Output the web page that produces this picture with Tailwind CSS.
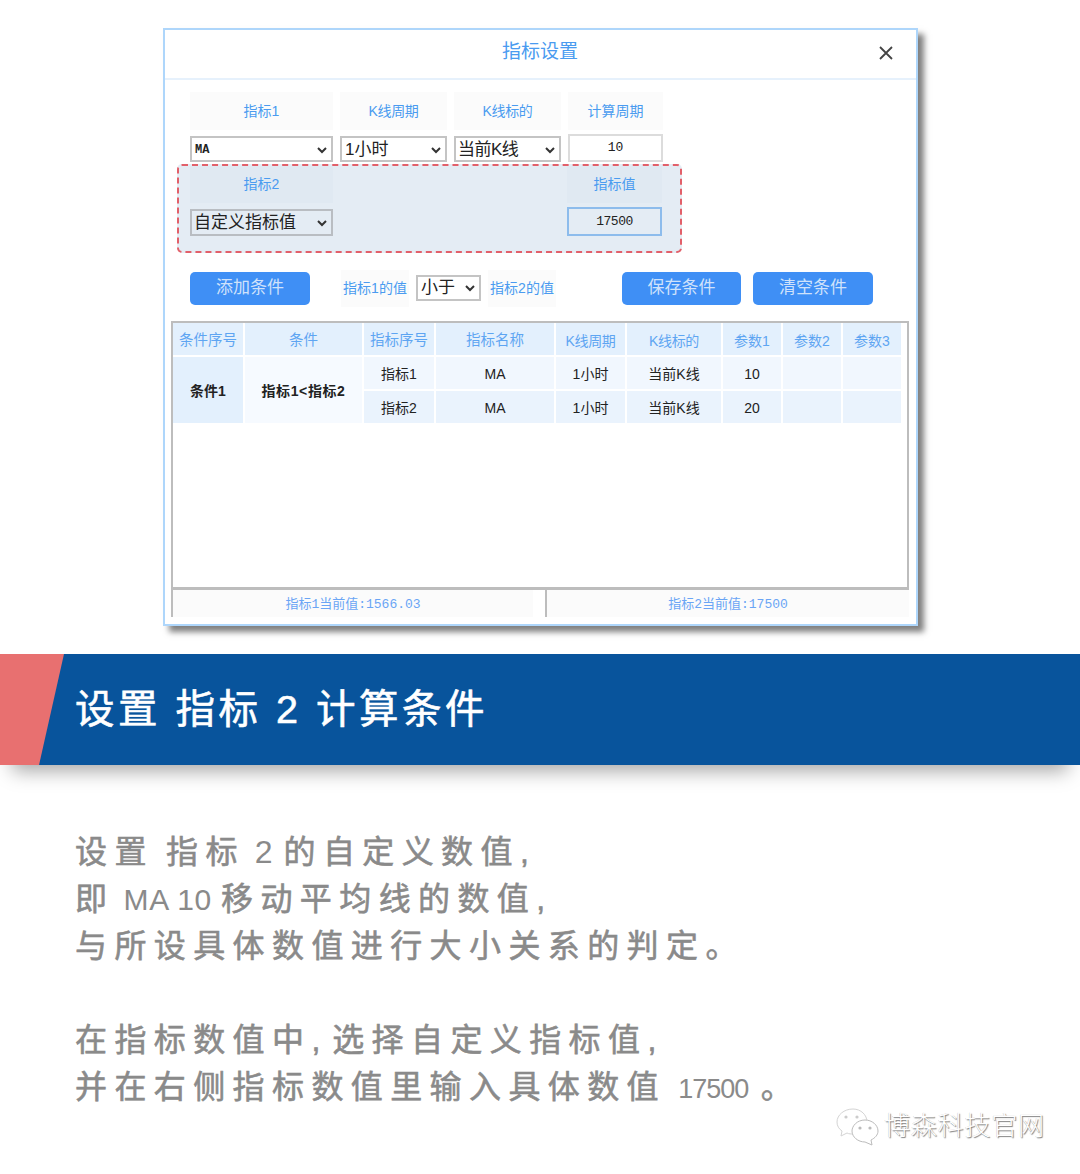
<!DOCTYPE html>
<html lang="zh-CN">
<head>
    <meta charset="UTF-8">
    <title>指标设置</title>
    <script src="https://cdn.jsdelivr.net/npm/@tailwindcss/browser@4"></script>
</head>
<body class="bg-white font-['Liberation_Sans','Noto_Sans_CJK_SC',sans-serif]">
<div class="w-[1080px] h-[1174px] overflow-hidden pt-[28px]">

    <!-- 指标设置 窗口 -->
    <div class="ml-[163px] w-[755px] h-[598px] bg-white border-2 border-[#aed6fb] shadow-[6px_6px_6px_rgba(0,0,0,0.5)]">
        <div class="relative h-[50px] border-b-2 border-[#e6f1fc] flex items-center justify-center pb-[4px]">
            <span class="text-[19px] text-[#4a9bf0] -ml-[1px]">指标设置</span>
            <svg class="absolute right-[22px] top-[15px]" width="16" height="16" viewBox="0 0 16 16">
                <path d="M2 2 L14 14 M14 2 L2 14" stroke="#444" stroke-width="1.8" fill="none"/>
            </svg>
        </div>

        <div class="pl-[25px] pt-[12px]">
            <div class="grid grid-cols-[143px_107px_107px_95px] gap-x-[7px] text-[14px] text-[#4a9bf0] text-center">
                <div class="h-[38px] bg-[#fbfbfb] flex items-center justify-center">指标1</div>
                <div class="h-[38px] bg-[#fbfbfb] flex items-center justify-center tracking-[-0.3px]">K线周期</div>
                <div class="h-[38px] bg-[#fbfbfb] flex items-center justify-center tracking-[-0.3px]">K线标的</div>
                <div class="h-[38px] bg-[#fbfbfb] flex items-center justify-center">计算周期</div>
            </div>
            <div class="grid grid-cols-[143px_107px_107px_95px] gap-x-[7px] mt-[4px] items-end h-[28px] text-[#222]">
                <div class="h-[26px] border-2 border-[#c4c4c4] flex items-center justify-between pl-[3px] pr-[3px] pt-[2px] font-['Liberation_Mono'] font-bold text-[12px]">MA
                    <svg width="12" height="12" viewBox="0 0 12 12"><path d="M2 4 L6 8 L10 4" stroke="#333" stroke-width="2" fill="none"/></svg>
                </div>
                <div class="h-[26px] border-2 border-[#c4c4c4] flex items-center justify-between pl-[3px] pr-[3px] pt-[1px] text-[17px]">1小时
                    <svg width="12" height="12" viewBox="0 0 12 12"><path d="M2 4 L6 8 L10 4" stroke="#333" stroke-width="2" fill="none"/></svg>
                </div>
                <div class="h-[26px] border-2 border-[#c4c4c4] flex items-center justify-between pl-[2px] pr-[3px] pt-[1px] text-[17px] tracking-[-0.5px]">当前K线
                    <svg width="12" height="12" viewBox="0 0 12 12"><path d="M2 4 L6 8 L10 4" stroke="#333" stroke-width="2" fill="none"/></svg>
                </div>
                <div class="h-[28px] border-2 border-[#dcdcdc] flex items-center justify-center font-['Liberation_Mono'] text-[13px]">10</div>
            </div>

            <!-- 指标2 -->
            <div class="-ml-[13px] w-[505px] h-[89px] mt-[2px] pl-[11px] bg-[#e4ecf4] border-2 border-dashed border-[#e2606a] rounded-[5px]">
                <div class="grid grid-cols-[143px_234px_95px] text-[14px] text-[#4a9bf0] text-center h-[37px]">
                    <div class="bg-[#e0e9f2] flex items-center justify-center">指标2</div>
                    <div></div>
                    <div class="w-[95px] bg-[#e0e9f2] flex items-center justify-center">指标值</div>
                </div>
                <div class="grid grid-cols-[143px_234px_95px] mt-[4px] h-[29px] items-end text-[#222]">
                    <div class="h-[27px] border-2 border-[#b9bdc2] flex items-center justify-between pl-[2px] pr-[3px] text-[17px]">自定义指标值
                        <svg width="12" height="12" viewBox="0 0 12 12"><path d="M2 4 L6 8 L10 4" stroke="#333" stroke-width="2" fill="none"/></svg>
                    </div>
                    <div></div>
                    <div class="w-[95px] h-[29px] border-2 border-[#8dbcec] flex items-center justify-center font-['Liberation_Mono'] text-[13px] tracking-[-0.5px]">17500</div>
                </div>
            </div>

            <!-- 条件按钮 -->
            <div class="flex items-center h-[46px] mt-[12px] text-[14px] text-[#4a9bf0]">
                <div class="w-[120px] h-[33px] rounded-[5px] bg-[#3f8ff5] text-[#cfe2fb] text-[17px] flex items-center justify-center">添加条件</div>
                <div class="ml-[31px] w-[68px] h-[37px] bg-[#fbfbfb] flex items-center justify-center">指标1的值</div>
                <div class="ml-[7px] w-[65px] h-[26px] border-2 border-[#c4c4c4] text-[#222] flex items-center justify-between pl-[3px] pr-[3px] text-[17px]">小于
                    <svg width="12" height="12" viewBox="0 0 12 12"><path d="M2 4 L6 8 L10 4" stroke="#333" stroke-width="2" fill="none"/></svg>
                </div>
                <div class="ml-[9px] w-[68px] h-[37px] bg-[#fbfbfb] flex items-center justify-center -translate-x-[2px]">指标2的值</div>
                <div class="ml-[64px] w-[119px] h-[33px] rounded-[5px] bg-[#3f8ff5] text-[#cfe2fb] text-[17px] flex items-center justify-center">保存条件</div>
                <div class="ml-[12px] w-[120px] h-[33px] rounded-[5px] bg-[#3f8ff5] text-[#cfe2fb] text-[17px] flex items-center justify-center">清空条件</div>
            </div>
        </div>

        <!-- 条件表格 -->
        <div class="ml-[6px] w-[738px] h-[269px] mt-[10px] border-2 border-[#bdbdbd] border-b-[3px]">
            <div class="grid grid-cols-[70px_117px_70px_118px_69px_94px_58px_58px_58px] grid-rows-[32px_32px_32px] gap-[2px] text-center text-[14px] text-[#222] [&>div]:pt-[2px] [&>div:nth-child(-n+9)]:pt-[4px]">
                <div class="bg-[#e3f0fd] text-[#5ea5f2] text-[14.5px] flex items-center justify-center">条件序号</div>
                <div class="bg-[#e3f0fd] text-[#5ea5f2] text-[14.5px] flex items-center justify-center">条件</div>
                <div class="bg-[#e3f0fd] text-[#5ea5f2] text-[14.5px] flex items-center justify-center">指标序号</div>
                <div class="bg-[#e3f0fd] text-[#5ea5f2] text-[14.5px] flex items-center justify-center">指标名称</div>
                <div class="bg-[#e3f0fd] text-[#5ea5f2] text-[14px] tracking-[-0.3px] flex items-center justify-center">K线周期</div>
                <div class="bg-[#e3f0fd] text-[#5ea5f2] text-[14px] tracking-[-0.3px] flex items-center justify-center">K线标的</div>
                <div class="bg-[#e3f0fd] text-[#5ea5f2] text-[14px] flex items-center justify-center">参数1</div>
                <div class="bg-[#e3f0fd] text-[#5ea5f2] text-[14px] flex items-center justify-center">参数2</div>
                <div class="bg-[#e3f0fd] text-[#5ea5f2] text-[14px] flex items-center justify-center">参数3</div>

                <div class="row-span-2 bg-[#e3f0fd] font-bold flex items-center justify-center">条件1</div>
                <div class="row-span-2 bg-[#f6faff] font-bold tracking-[0.6px] flex items-center justify-center">指标1&lt;指标2</div>
                <div class="bg-[#f1f7fe] flex items-center justify-center">指标1</div>
                <div class="bg-[#f1f7fe] flex items-center justify-center">MA</div>
                <div class="bg-[#f1f7fe] flex items-center justify-center">1小时</div>
                <div class="bg-[#f1f7fe] flex items-center justify-center">当前K线</div>
                <div class="bg-[#f1f7fe] flex items-center justify-center">10</div>
                <div class="bg-[#f1f7fe]"></div>
                <div class="bg-[#f1f7fe]"></div>

                <div class="bg-[#eaf3fd] flex items-center justify-center">指标2</div>
                <div class="bg-[#eaf3fd] flex items-center justify-center">MA</div>
                <div class="bg-[#eaf3fd] flex items-center justify-center">1小时</div>
                <div class="bg-[#eaf3fd] flex items-center justify-center">当前K线</div>
                <div class="bg-[#eaf3fd] flex items-center justify-center">20</div>
                <div class="bg-[#eaf3fd]"></div>
                <div class="bg-[#eaf3fd]"></div>
            </div>
        </div>

        <!-- 当前值 -->
        <div class="ml-[6px] w-[738px] h-[28px] flex text-[13px] text-[#6aa5f5] font-['Liberation_Mono','Noto_Sans_CJK_SC']">
            <div class="w-[374px] pr-[12px]">
                <div class="h-[27px] border-l-2 border-[#bdbdbd] bg-[#fbfbfb] flex items-center justify-center pt-[3px]">指标1当前值:1566.03</div>
            </div>
            <div class="flex-1 h-[27px] border-l-2 border-[#bdbdbd] bg-[#fbfbfb] flex items-center justify-center pt-[3px]">指标2当前值:17500</div>
        </div>
    </div>

    <!-- 标题条 -->
    <div class="mt-[28px] relative h-[111px] bg-[#08549c] flex items-center pl-[75px] shadow-[0_18px_18px_-12px_rgba(0,0,0,0.35)]">
        <div class="absolute left-0 top-0 w-[64px] h-full bg-[#e87070] [clip-path:polygon(0_0,100%_0,61%_100%,0_100%)]"></div>
        <h1 class="relative text-white text-[39.5px] font-normal tracking-[3.5px] whitespace-pre [-webkit-text-stroke:0.6px_#ffffff]">设置 指标 2 计算条件</h1>
    </div>

    <!-- 说明文字 -->
    <div class="pl-[75px] pt-[64px] text-[32px] leading-[47px] tracking-[7.4px] font-normal text-[#8a8a8a] [word-spacing:-4px] [-webkit-text-stroke:0.6px_#8a8a8a]">
        <p class="whitespace-pre">设置 指标<span class="tracking-[1px] [word-spacing:0] [-webkit-text-stroke:0]"> 2 </span>的自定义数值,</p>
        <p class="whitespace-pre">即<span class="text-[30px] tracking-[0.7px] [word-spacing:0] [-webkit-text-stroke:0]"> MA 10 </span>移动平均线的数值,</p>
        <p class="whitespace-pre">与所设具体数值进行大小关系的判定。</p>
        <p class="whitespace-pre mt-[47px]">在指标数值中<span class="tracking-[1.5px] [word-spacing:0]">, </span>选择自定义指标值,</p>
        <p class="whitespace-pre">并在右侧指标数值里输入具体数值 <span class="text-[27px] tracking-[-1px] [-webkit-text-stroke:0]">17500</span> 。</p>
    </div>

    <!-- 水印 -->
    <div class="-mt-[6px] ml-[836px] flex items-center gap-[5px]">
        <svg width="43" height="38" viewBox="0 0 43 38">
            <path d="M17 1 C8 1 1 7 1 14 C1 18 3 21 6 23 L5 28 L11 25 C13 26 15 26 17 26 C26 26 31 20 31 14 C31 7 25 1 17 1 Z" fill="#fff" stroke="#d4d4d4"/>
            <path d="M29 12 C21 12 16 18 16 23 C16 29 22 34 29 34 L36 37 L35 32 C39 30 42 27 42 23 C42 17 36 12 29 12 Z" fill="#fff" stroke="#bcbcbc"/>
            <circle cx="10" cy="9" r="1.6" fill="#ccc"/><circle cx="21" cy="9" r="1.6" fill="#ccc"/>
            <circle cx="24" cy="20" r="1.6" fill="#bbb"/><circle cx="34" cy="20" r="1.6" fill="#bbb"/>
        </svg>
        <span class="text-[26px] font-light text-white tracking-[0.8px] [text-shadow:1px_1px_1px_rgba(0,0,0,0.5),-0.5px_-0.5px_0.5px_rgba(0,0,0,0.2)]">博森科技官网</span>
    </div>
</div>
</body>
</html>
